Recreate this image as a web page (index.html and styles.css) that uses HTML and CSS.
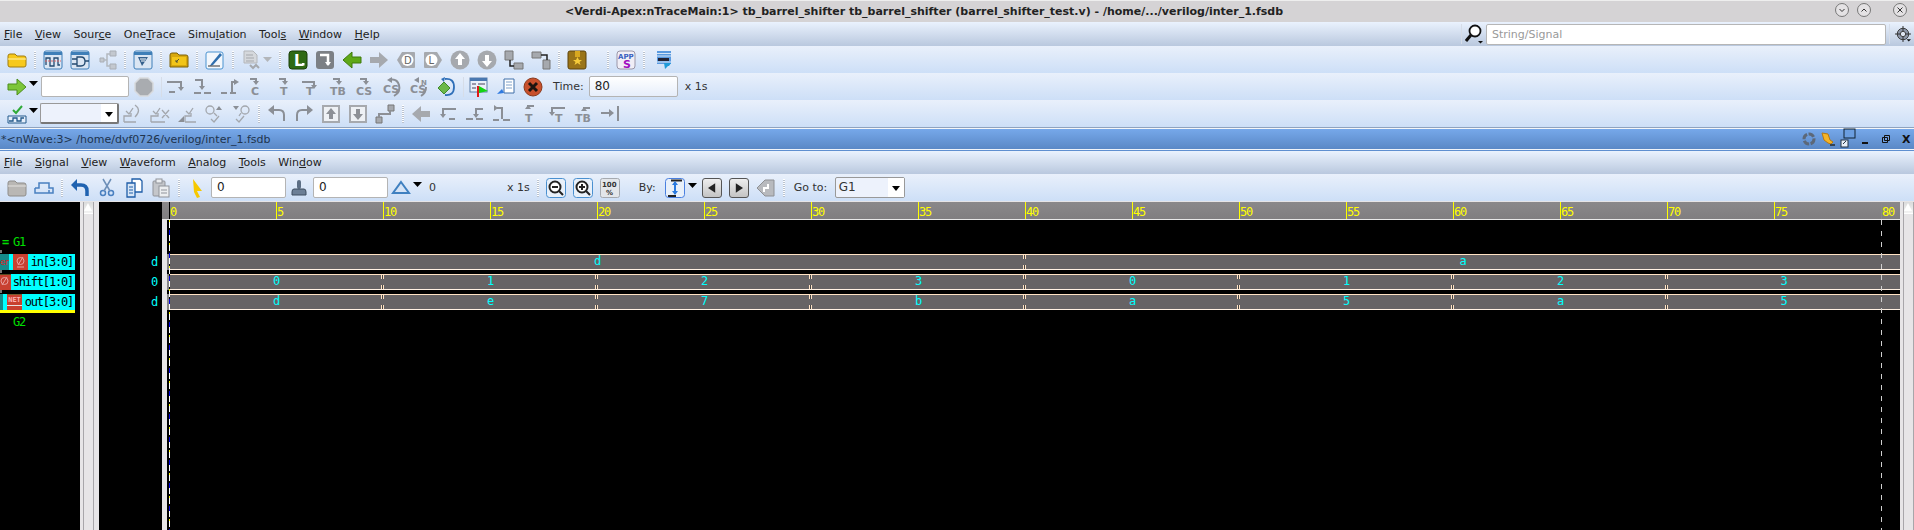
FILE: index.html
```html
<!DOCTYPE html>
<html lang="en">

<head>
  <meta charset="UTF-8">
  <title>Verdi</title>
  <link rel="stylesheet" href="styles.css">
</head>

<body>
  <div class="title">
    <span>&lt;Verdi-Apex:nTraceMain:1&gt; tb_barrel_shifter tb_barrel_shifter (barrel_shifter_test.v) - /home/.../verilog/inter_1.fsdb</span>
    <div class="wm">
      <svg class="wb" viewBox="0 0 14 14"><circle cx="7" cy="7" r="6.5"/><path d="M4.5 6l2.5 2.5L9.500 6"/></svg>
      <svg class="wb" viewBox="0 0 14 14"><circle cx="7" cy="7" r="6.5"/><path d="M4.5 8.500L7 6l2.500 2.500"/></svg>
      <svg class="wb wb-x" viewBox="0 0 14 14"><circle cx="7" cy="7" r="6.5"/><path d="M4.500 4.500l5 5M9.500 4.500l-5 5"/></svg>
    </div>
  </div>

  <div class="menu">
    <span><u>F</u>ile</span><span><u>V</u>iew</span><span>Sour<u>c</u>e</span><span>One<u>T</u>race</span><span>Simu<u>l</u>ation</span><span>Tool<u>s</u></span><span><u>W</u>indow</span><span><u>H</u>elp</span>
    <div class="search">
      <i class="vline"></i>
      <svg class="mag" viewBox="0 0 18 20"><circle cx="10" cy="7" r="5.500" fill="#fff" stroke="#111" stroke-width="1.800"/><path d="M6 11l-5 6" stroke="#111" stroke-width="3" fill="none"/><path d="M13 17h5l-2.500 2.500z" fill="#111"/></svg>
      <div class="searchbox">String/Signal</div>
      <i class="vline"></i>
      <svg class="target" viewBox="0 0 18 18"><circle cx="9" cy="9" r="6.500" fill="#8d96a8" stroke="#333"/><path d="M9 0v18M0 9h18" stroke="#222" fill="none"/><circle cx="9" cy="9" r="3" fill="#dfe6f2" stroke="#333"/><path d="M13 15h5l-2.500 2.500z" fill="#111"/></svg>
    </div>
  </div>

  <!-- main toolbar 1 -->
  <div class="tb">
    <svg class="ic" viewBox="0 0 20 20"><path d="M1 6q0-2 2-2h5l2 2h7q2 0 2 2v7q0 2-2 2H3q-2 0-2-2z" fill="#f7c91c" stroke="#a07c10"/><path d="M1 9h18" stroke="#fff3b0"/></svg>
    <i class="sep"></i>
    <svg class="ic" viewBox="0 0 20 20"><rect x="1" y="1" width="18" height="18" rx="2" fill="#dbe6f3" stroke="#3f7fb8"/><path d="M1 2h18v3H1z" fill="#3f7fb8"/><path d="M3 15V8h4v8h4V8h4v7h2" fill="none" stroke="#234a70" stroke-width="1.300"/><path d="M2 11h16" stroke="#d66" stroke-dasharray="2 1"/></svg>
    <svg class="ic" viewBox="0 0 20 20"><rect x="1" y="1" width="18" height="18" rx="2" fill="#dbe6f3" stroke="#3f7fb8"/><path d="M1 2h18v3H1z" fill="#3f7fb8"/><path d="M7 7h4q4 0 4 4.500T11 16H7zM2 9h5M2 14h5M15 11h4" fill="none" stroke="#234a70" stroke-width="1.300"/></svg>
    <svg class="ic" viewBox="0 0 20 20"><path d="M3 8h4v4H3zM13 1h6v5h-6zM13 14h6v5h-6z" fill="#c3c8cf" stroke="#a9aeb5"/><path d="M7 10h3V4h3M10 10v6h3" fill="none" stroke="#b3b8bf" stroke-width="1.500"/></svg>
    <i class="sep"></i>
    <svg class="ic" viewBox="0 0 20 20"><rect x="1" y="1" width="18" height="18" rx="2" fill="#dbe6f3" stroke="#3f7fb8"/><path d="M1 2h18v3H1z" fill="#3f7fb8"/><path d="M5 7h10L9 16z" fill="#35608c"/><path d="M7 9h6M8 11h4" stroke="#fff"/></svg>
    <i class="sep"></i>
    <svg class="ic" viewBox="0 0 20 20"><path d="M1 5q0-2 2-2h5l2 2h7q2 0 2 2v10H1z" fill="#d8a80c" stroke="#7d6008"/><path d="M3 7h14v8H3z" fill="#f2c518"/><path d="M7 12l3-3M7 10v2h2" stroke="#553" fill="none"/></svg>
    <i class="sep"></i>
    <svg class="ic" viewBox="0 0 20 20"><rect x="1" y="2" width="17" height="17" rx="2" fill="#f3f7fc" stroke="#4b93d0"/><path d="M6 14L15 3l2 2-9 10-3 1z" fill="#2f6fae"/><path d="M3 16h12" stroke="#333"/></svg>
    <i class="sep"></i>
    <svg class="ic" viewBox="0 0 20 20"><path d="M3 1h9l4 4v8H3z" fill="#d5d8dc" stroke="#b3b6ba"/><path d="M5 5h7M5 8h8M5 11h8" stroke="#a5a8ad"/><path d="M9 15l3 3 3-3 3 3" stroke="#a5a8ad" stroke-width="2" fill="none"/></svg>
    <svg class="dd dd-off" viewBox="0 0 9 5"><path d="M0 0h9L4.500 5z"/></svg>
    <i class="sep"></i>
    <svg class="ic" viewBox="0 0 20 20"><rect x="1" y="1" width="18" height="18" rx="3" fill="#2f6a14" stroke="#1a3f08"/><text x="6" y="16" class="lb" fill="#fff">L</text><rect x="14" y="13" width="2.500" height="2.500" fill="#fff"/></svg>
    <svg class="ic" viewBox="0 0 20 20"><rect x="1" y="1" width="18" height="18" rx="3" fill="#7c8085"/><path d="M5 5h8v10" fill="none" stroke="#fff" stroke-width="2.500"/><path d="M10 12l3 4 3-4z" fill="#fff"/></svg>
    <svg class="ic" viewBox="0 0 20 20"><path d="M1 10l9-8v5h9v6h-9v5z" fill="#5fa818" stroke="#3f7a0c"/></svg>
    <svg class="ic" viewBox="0 0 20 20"><path d="M19 10l-9-8v5H1v6h9v5z" fill="#a6a9ae"/></svg>
    <svg class="ic" viewBox="0 0 20 20"><path d="M1 10l5-8h12q1 0 1 1v14q0 1-1 1H6z" fill="#a6a9ae"/><circle cx="11.500" cy="10" r="6" fill="#fff"/><text x="8" y="14" class="ms">D</text></svg>
    <svg class="ic" viewBox="0 0 20 20"><path d="M19 10l-5-8H2q-1 0-1 1v14q0 1 1 1h12z" fill="#a6a9ae"/><circle cx="8.500" cy="10" r="6" fill="#fff"/><text x="5.500" y="14" class="ms">L</text></svg>
    <svg class="ic" viewBox="0 0 20 20"><circle cx="10" cy="10" r="9.500" fill="#a6a9ae"/><path d="M10 3l5 6h-3v6H8V9H5z" fill="#fff"/></svg>
    <svg class="ic" viewBox="0 0 20 20"><circle cx="10" cy="10" r="9.500" fill="#a6a9ae"/><path d="M10 17l5-6h-3V5H8v6H5z" fill="#fff"/></svg>
    <svg class="ic" viewBox="0 0 20 20"><path d="M1 1h8v9H1zM10 13h9v6h-9z" fill="#a6a9ae" stroke="#777"/><path d="M6 10v6h4" fill="none" stroke="#222" stroke-width="1.500"/></svg>
    <svg class="ic" viewBox="0 0 20 20"><path d="M1 2h9v6H1zM12 10h7v9h-7z" fill="#a6a9ae" stroke="#777"/><path d="M10 5h6v5" fill="none" stroke="#222" stroke-width="1.500"/></svg>
    <i class="sep"></i>
    <svg class="ic" viewBox="0 0 20 20"><rect x="1" y="1" width="18" height="18" rx="2" fill="#9a7418" stroke="#5c430c"/><path d="M8 1h5v6H8z" fill="#d9a81f"/><path d="M10.500 7l1.500 3h3l-2.500 2 1 3-3-2-3 2 1-3-2.500-2h3z" fill="#f6cc3a"/></svg>
    <i class="sep sep-far"></i>
    <svg class="ic" viewBox="0 0 20 20"><rect x="1" y="1" width="18" height="18" rx="3" fill="#f0eef6" stroke="#9a96a8"/><text x="2" y="9" class="ap">APP</text><text x="7" y="18" class="as">S</text></svg>
    <i class="sep"></i>
    <svg class="ic ic-push" viewBox="0 0 20 20"><path d="M3 1h14v13H3z" fill="#5a9ae0"/><path d="M3 3.500h14M3 6h14M3 12h14" stroke="#d5e6f8"/><path d="M4 8h11v3H4z" fill="#223"/><path d="M10 13h7l-2 3h-1l-3 3z" fill="#1f9ad8"/></svg>
  </div>

  <!-- main toolbar 2 -->
  <div class="tb">
    <svg class="ic" viewBox="0 0 20 20"><path d="M1 7h9V2l9 8-9 8v-5H1z" fill="#7cc63a" stroke="#4c8e1a"/></svg>
    <svg class="dd dd-l" viewBox="0 0 9 5"><path d="M0 0h9L4.500 5z"/></svg>
    <div class="inp inp-sig"></div>
    <svg class="ic ic-m2" viewBox="0 0 20 20"><path d="M6 1h8l5 5v8l-5 5H6l-5-5V6z" fill="#a9acb0" stroke="#d8dadd" stroke-width="1.500"/></svg>
    <i class="vline"></i>
    <svg class="ic g ic-m3" viewBox="0 0 20 20"><path d="M1 5h14v6M3 15h6"/><path d="M12 10h6l-3 4z" class="gf"/></svg>
    <svg class="ic g" viewBox="0 0 20 20"><path d="M2 3h7v7M1 16h7M11 16h7"/><path d="M6 9h6l-3 4z" class="gf"/></svg>
    <svg class="ic g" viewBox="0 0 20 20"><path d="M1 16h6M10 16h6M12 16V5h3"/><path d="M14 2l5 3-5 3z" class="gf"/></svg>
    <svg class="ic g" viewBox="0 0 20 20"><path d="M3 2h6v3"/><path d="M6 4h6l-3 4z" class="gf"/><text x="4" y="18" class="gt">C</text></svg>
    <svg class="ic g" viewBox="0 0 20 20"><path d="M5 2h6v3"/><path d="M8 4h6l-3 4z" class="gf"/><text x="6" y="18" class="gt">T</text></svg>
    <svg class="ic g" viewBox="0 0 20 20"><path d="M1 5h12v5"/><path d="M10 8h6l-3 4z" class="gf"/><text x="5" y="18" class="gt">T</text></svg>
    <svg class="ic g" viewBox="0 0 20 20"><path d="M5 2h6v3"/><path d="M8 4h6l-3 4z" class="gf"/><text x="2" y="18" class="gt">TB</text></svg>
    <svg class="ic g" viewBox="0 0 20 20"><path d="M5 2h6v3"/><path d="M8 4h6l-3 4z" class="gf"/><text x="1" y="18" class="gt">CS</text></svg>
    <svg class="ic g" viewBox="0 0 20 20"><path d="M7 3q8-2 10 5t-5 11" stroke-width="1.500"/><path d="M5 3l5-3v6z" class="gf"/><text x="1" y="16" class="gt">CS</text></svg>
    <svg class="ic g" viewBox="0 0 20 20"><path d="M7 3h3M17 10q0 6-5 9" stroke-width="1.500"/><path d="M5 3l5-3v6z" class="gf"/><text x="1" y="16" class="gt">CS</text><text x="12" y="8" class="gn">N</text></svg>
    <svg class="ic" viewBox="0 0 20 20"><path d="M9 2q9-1 9 8t-9 8" fill="none" stroke="#2f6fb8" stroke-width="1.800"/><path d="M8 5l-3-3 4-2z" fill="#2f6fb8"/><path d="M8 5l6 6-6 6-6-6z" fill="#6cb84a" stroke="#3f8a2a"/></svg>
    <i class="vline"></i>
    <svg class="ic ic-m2" viewBox="0 0 20 20"><rect x="1" y="1" width="17" height="14" fill="#eaf0f8" stroke="#5c7fa8"/><path d="M1 1h17v3H1z" fill="#4a78b0"/><path d="M3 6h4v2H3zM9 6h7v2H9zM3 10h4v2H3z" fill="#99a"/><path d="M9 9v11" stroke="#e01818" stroke-width="2"/><path d="M10 9l9 5-9 2z" fill="#14d414"/></svg>
    <svg class="ic" viewBox="0 0 20 20"><path d="M8 2h10v14H8z" fill="#fff" stroke="#3f6fa8"/><path d="M10 5h6M10 8h6M10 11h6" stroke="#7fa0c8"/><path d="M1 17l5-5 2 4z" fill="#2f7ae0"/></svg>
    <svg class="ic" viewBox="0 0 20 20"><circle cx="10" cy="10" r="9" fill="#c8502c" stroke="#8a3a1c"/><path d="M6 6l8 8M14 6l-8 8" stroke="#1c1410" stroke-width="3"/></svg>
    <span class="lab lab-time">Time:</span>
    <div class="inp inp-time">80</div>
    <span class="lab">x 1s</span>
  </div>

  <!-- main toolbar 3 -->
  <div class="tb">
    <svg class="ic" viewBox="0 0 20 20"><path d="M6 6l3 3 6-7" fill="none" stroke="#2faa38" stroke-width="2"/><path d="M1 12h18v7H1z" fill="#e6eefa" stroke="#235a8c"/><path d="M2 17h4v-3h4v3h4v-3h3" fill="none" stroke="#235a8c" stroke-width="1.300"/></svg>
    <svg class="dd dd-l" viewBox="0 0 9 5"><path d="M0 0h9L4.500 5z"/></svg>
    <div class="combo combo-a"><b></b></div>
    <svg class="ic g2 ic-m3" viewBox="0 0 20 20"><path d="M1 18v-6h7v-3M1 18h12M3 7l3 3 4-6"/><path d="M12 1q7 5 0 12" stroke-width="2"/></svg>
    <svg class="ic g2" viewBox="0 0 20 20"><path d="M1 18v-6h7v-3M1 18h14M3 7l3 3 4-6M12 6l7 8M19 6l-7 8"/></svg>
    <svg class="ic g2" viewBox="0 0 20 20"><path d="M8 18v-6h6v-3M8 18h11M9 7l3 3 4-6"/><path d="M1 18l6-6v6z" class="gf"/></svg>
    <svg class="ic g2" viewBox="0 0 20 20"><circle cx="6" cy="6" r="4"/><path d="M10 9l3 3M7 15l3 3 5-6"/><path d="M12 6l3-4 3 4z" class="gf"/></svg>
    <svg class="ic g2" viewBox="0 0 20 20"><circle cx="14" cy="6" r="4"/><path d="M10 9l-2 3M5 15l3 3 5-6"/><path d="M2 2h6l-3 4z" class="gf"/></svg>
    <i class="sep"></i>
    <svg class="ic g" viewBox="0 0 20 20"><path d="M5 6h7q5 0 5 5v6" stroke-width="3"/><path d="M7 1v10L1 6z" class="gf"/></svg>
    <svg class="ic g" viewBox="0 0 20 20"><path d="M15 6H8q-5 0-5 5v6" stroke-width="3"/><path d="M13 1v10l6-5z" class="gf"/></svg>
    <svg class="ic" viewBox="0 0 20 20"><rect x="1" y="1" width="18" height="18" fill="#a6a9ae"/><rect x="3" y="3" width="14" height="14" fill="#eef1f5"/><path d="M10 4l5 6h-3v5H8v-5H5z" fill="#8d9096"/></svg>
    <svg class="ic" viewBox="0 0 20 20"><rect x="1" y="1" width="18" height="18" fill="#a6a9ae"/><rect x="3" y="3" width="14" height="14" fill="#eef1f5"/><path d="M10 16l5-6h-3V5H8v5H5z" fill="#8d9096"/></svg>
    <svg class="ic" viewBox="0 0 20 20"><path d="M13 1h6v6h-6zM1 13h6v6H1z" fill="#a6a9ae" stroke="#777"/><path d="M15 7v3H4v3" fill="none" stroke="#8d9096" stroke-width="2"/></svg>
    <i class="sep"></i>
    <svg class="ic" viewBox="0 0 20 20"><path d="M1 10l9-8v5h9v6h-9v5z" fill="#a6a9ae"/></svg>
    <svg class="ic g" viewBox="0 0 20 20"><path d="M18 5H5v6M11 15h6"/><path d="M2 10h6l-3 4z" class="gf"/></svg>
    <svg class="ic g" viewBox="0 0 20 20"><path d="M18 5h-7v6M1 15h7M11 15h7"/><path d="M8 10h6l-3 4z" class="gf"/></svg>
    <svg class="ic g" viewBox="0 0 20 20"><path d="M5 4h5v11M11 16h7M1 16h6"/><path d="M2 1l4 3-4 3z" class="gf"/></svg>
    <svg class="ic g" viewBox="0 0 20 20"><path d="M15 2H9v3"/><path d="M6 5h6l-3-4z" class="gf"/><text x="6" y="18" class="gt">T</text></svg>
    <svg class="ic g" viewBox="0 0 20 20"><path d="M19 4H6v5"/><path d="M3 8h6l-3 4z" class="gf"/><text x="9" y="18" class="gt">T</text></svg>
    <svg class="ic g" viewBox="0 0 20 20"><path d="M17 4h-6v3"/><path d="M8 7h6l-3-4z" class="gf"/><text x="2" y="18" class="gt">TB</text></svg>
    <svg class="ic g" viewBox="0 0 20 20"><path d="M1 9h10"/><path d="M9 5l5 4-5 4z" class="gf"/><path d="M18 2v15" stroke-width="2.500"/></svg>
  </div>

  <i class="rule"></i>

  <div class="subtitle">
    <span>*&lt;nWave:3&gt; /home/dvf0726/verilog/inter_1.fsdb</span>
    <div class="subwm">
      <svg class="sb" viewBox="0 0 14 14"><circle cx="7" cy="7" r="5" fill="none" stroke="#5c6878" stroke-width="3" stroke-dasharray="6 1.500"/></svg>
      <svg class="sb sb-pin" viewBox="0 0 16 16"><path d="M2 2l6 1 2 6 3 2-2 2-3-1-4-3z" fill="#f5b428" stroke="#b87a10"/><path d="M10 14h5" stroke="#345" stroke-width="2"/></svg>
      <svg class="sb sb-win" viewBox="0 0 16 20"><rect x="4" y="1" width="11" height="9" fill="#6b9ee0" stroke="#123"/><rect x="1" y="12" width="7" height="7" fill="#e8eef6" stroke="#234"/><path d="M3 16l3-3" stroke="#234"/></svg>
      <i class="minb"></i>
      <svg class="sb sb-res" viewBox="0 0 8 8"><path d="M2.500.5h5v5h-5zM.5 2.500h5v5h-5z" fill="#6f9fe0" stroke="#111"/></svg>
      <span class="subx">X</span>
    </div>
  </div>

  <div class="menu menu-w">
    <span><u>F</u>ile</span><span><u>S</u>ignal</span><span><u>V</u>iew</span><span><u>W</u>aveform</span><span><u>A</u>nalog</span><span><u>T</u>ools</span><span>Win<u>d</u>ow</span>
  </div>

  <!-- nWave toolbar -->
  <div class="tb tb-w">
    <svg class="ic" viewBox="0 0 20 20"><path d="M1 5q0-2 2-2h5l2 2h7q2 0 2 2v9q0 2-2 2H3q-2 0-2-2z" fill="#b9b7b4" stroke="#8f8d8a"/><path d="M1 8h18" stroke="#e4e2df"/></svg>
    <svg class="ic" viewBox="0 0 20 20"><path d="M1 10h4V5h10v5h4v5h-4v-3M1 10v5h14v-2" fill="none" stroke="#4a80c0" stroke-width="1.500"/></svg>
    <i class="sep"></i>
    <svg class="ic" viewBox="0 0 20 20"><path d="M5 7h6q6 0 6 6v5" fill="none" stroke="#1f62b0" stroke-width="3.500"/><path d="M7 1v12L1 7z" fill="#1f62b0"/></svg>
    <svg class="ic" viewBox="0 0 20 20"><circle cx="6" cy="15" r="2.500" fill="none" stroke="#4a80c0" stroke-width="1.500"/><circle cx="14" cy="15" r="2.500" fill="none" stroke="#4a80c0" stroke-width="1.500"/><path d="M7 13L14 1M13 13L6 1" stroke="#6d8fb8" stroke-width="1.500"/></svg>
    <svg class="ic" viewBox="0 0 20 20"><path d="M8 1h8l2 2v11H8z" fill="#fff" stroke="#1f5ea8" stroke-width="1.300"/><path d="M3 5h8v14H3z" fill="#d8e6f6" stroke="#1f5ea8" stroke-width="1.300"/><path d="M5 9h4M5 12h4M5 15h4" stroke="#1f5ea8"/></svg>
    <svg class="ic" viewBox="0 0 20 20"><rect x="2" y="3" width="12" height="15" rx="1" fill="#c4c6ca" stroke="#90939a"/><rect x="5" y="1" width="6" height="4" fill="#eceef0" stroke="#90939a"/><rect x="8" y="8" width="10" height="11" fill="#eceef0" stroke="#90939a"/><path d="M10 12h6M10 15h6" stroke="#90939a"/></svg>
    <i class="sep"></i>
    <svg class="ic" viewBox="0 0 20 20"><path d="M6 1l9 12H10l3 6-3 1-3-6z" fill="#f6c800"/></svg>
    <div class="inp inp-w inp-first">0</div>
    <svg class="ic ic-m4" viewBox="0 0 20 20"><rect x="8" y="2" width="4" height="9" rx="2" fill="#5d6f85"/><path d="M5 11h10q2 0 2 3v3H3v-3q0-3 2-3z" fill="#6c7f96" stroke="#3e4e60"/></svg>
    <div class="inp inp-w inp-second">0</div>
    <svg class="ic ic-m4" viewBox="0 0 20 20"><path d="M10 4l8 11H2z" fill="#d6e4f6" stroke="#3f80c0" stroke-width="2"/></svg>
    <svg class="dd dd-l" viewBox="0 0 9 5"><path d="M0 0h9L4.500 5z"/></svg>
    <span class="lab lab-z">0</span>
    <span class="lab lab-x">x 1s</span>
    <i class="sep"></i>
    <svg class="ic" viewBox="0 0 20 20"><rect x=".5" y=".5" width="19" height="19" rx="3" fill="#e8f0fa" stroke="#4a90d0"/><circle cx="9" cy="9" r="5.500" fill="#fff" stroke="#222" stroke-width="2"/><path d="M6 9h6M13 13l4 4" stroke="#222" stroke-width="2"/></svg>
    <svg class="ic" viewBox="0 0 20 20"><rect x=".5" y=".5" width="19" height="19" rx="3" fill="#e8f0fa" stroke="#4a90d0"/><circle cx="9" cy="9" r="5.500" fill="#fff" stroke="#222" stroke-width="2"/><path d="M6 9h6M9 6v6M13 13l4 4" stroke="#222" stroke-width="2"/></svg>
    <svg class="ic" viewBox="0 0 20 20"><rect x=".5" y=".5" width="19" height="19" rx="2" fill="#e3e6ea" stroke="#a6aab0"/><text x="2" y="9" class="pc">100</text><text x="6" y="17" class="pc">%</text></svg>
    <span class="lab lab-by">By:</span>
    <svg class="ic ic-p2" viewBox="0 0 20 20"><rect x=".5" y=".5" width="19" height="19" rx="3" fill="#e8f0fa" stroke="#4a80e0"/><path d="M6 2.500h11M3 18h8" stroke="#222" stroke-width="2"/><path d="M10 4v12" stroke="#2a7ae0" stroke-width="2"/><path d="M7 7l3-4 3 4zM7 13l3 4 3-4z" fill="#2a7ae0"/></svg>
    <svg class="dd dd-t" viewBox="0 0 9 5"><path d="M0 0h9L4.500 5z"/></svg>
    <div class="navb nav-prev"><svg viewBox="0 0 10 12"><path d="M9 0v12L0 6z"/></svg></div>
    <div class="navb"><svg viewBox="0 0 10 12"><path d="M1 0v12l9-6z"/></svg></div>
    <svg class="ic" viewBox="0 0 20 20"><path d="M1 10l8-8h9v16H9z" fill="#b8babe" stroke="#8e9094"/><path d="M8 14v-4h4V6" fill="none" stroke="#fff" stroke-width="2"/></svg>
    <i class="sep"></i>
    <span class="lab lab-go">Go to:</span>
    <div class="combo combo-g"><span>G1</span><b></b></div>
  </div>

  <div class="panes">
    <div class="names">
      <div class="nrow grp"><em>=</em>G1</div>
      <div class="nrow sigrow">
        <span class="teal teal-a">er</span>
        <svg class="redic" viewBox="0 0 15 16"><rect width="15" height="16" fill="#c84030"/><circle cx="7.500" cy="7" r="3.500" fill="none" stroke="#e8a0a0"/><path d="M5 11l5-8M4 13h7" stroke="#e8a0a0"/></svg>
        <span class="nm">in[3:0]</span>
      </div>
      <div class="nrow sigrow">
        <svg class="redic redic-a" viewBox="0 0 11 16"><rect width="11" height="16" fill="#c84030"/><path d="M0 0h11" stroke="#5a4a20" stroke-width="2"/><circle cx="4.500" cy="7" r="3.500" fill="none" stroke="#e8a0a0"/><path d="M2 11l5-8" stroke="#e8a0a0"/></svg>
        <span class="nm">shift[1:0]</span>
      </div>
      <div class="nrow sigrow sel">
        <span class="teal teal-b"></span><span class="netic">NET</span><span class="nm">out[3:0]</span>
      </div>
      <div class="nrow grp grp-2">G2</div>
    </div>
    <div class="vscroll"><div class="up"></div></div>
    <div class="vals">
      <div>d</div>
      <div>0</div>
      <div>d</div>
    </div>
    <div class="wavecol">
      <div class="ruler">
        <span class="t0">0</span><span>5</span><span>10</span><span>15</span><span>20</span><span>25</span><span>30</span><span>35</span><span>40</span><span>45</span><span>50</span><span>55</span><span>60</span><span>65</span><span>70</span><span>75</span><span class="t80">80</span>
      </div>
      <div class="wavebody">
        <div class="gutter"></div>
        <div class="canvas">
          <div class="sig"><b class="stub"></b><span class="seg w40">d</span><span class="seg last">a</span></div>
          <div class="sig"><b class="stub"></b><span class="seg w10">0</span><span class="seg w10">1</span><span class="seg w10">2</span><span class="seg w10">3</span><span class="seg w10">0</span><span class="seg w10">1</span><span class="seg w10">2</span><span class="seg last">3</span></div>
          <div class="sig"><b class="stub"></b><span class="seg w10">d</span><span class="seg w10">e</span><span class="seg w10">7</span><span class="seg w10">b</span><span class="seg w10">a</span><span class="seg w10">5</span><span class="seg w10">a</span><span class="seg last">5</span></div>
          <i class="cursor-a"></i>
          <i class="cursor-b"></i>
        </div>
      </div>
    </div>
    <div class="vscroll vscroll-r"><div class="up"></div></div>
  </div>
</body>

</html>
```

FILE: styles.css
```css
* {
  margin: 0;
  padding: 0;
  box-sizing: border-box;
}

html,
body {
  height: 530px;
  overflow: hidden;
}

body {
  background: #000;
  font-family: "DejaVu Sans", sans-serif;
  font-size: 11px;
  color: #222;
}

i,
em {
  font-style: normal;
}

/* window title */
.title {
  height: 22px;
  background: #d5d3d5;
  border-top: 1px solid #eee;
  display: flex;
  align-items: center;
  justify-content: center;
  position: relative;
  padding-right: 66px;
  font-weight: bold;
  font-size: 11px;
  color: #222;
}

.wm {
  position: absolute;
  top: 2px;
  left: 1835px;
  display: flex;
}

.wb {
  width: 14px;
  height: 14px;
  margin-right: 8px;
  fill: #e4e2e4;
  stroke: #777;
}

.wb-x {
  margin-left: 14px;
  margin-right: 0;
}

.wb path {
  fill: none;
  stroke: #333;
}

/* menus */
.menu {
  height: 24px;
  background: linear-gradient(#eaf2fe, #b9c8de);
  display: flex;
  align-items: center;
  gap: 12.500px;
  padding-left: 4px;
  color: #222;
  position: relative;
}

.menu u {
  text-decoration-thickness: 1px;
}

.menu-w {
  height: 24px;
  border-top: 1px solid #5f8fd0;
}

.search {
  margin-left: auto;
  display: flex;
  align-items: center;
  gap: 3px;
  padding-right: 3px;
}

.vline {
  display: block;
  width: 1px;
  height: 20px;
  background: #d6dde8;
}

.mag {
  width: 18px;
  height: 20px;
}

.target {
  width: 16px;
  height: 16px;
  margin-left: 2px;
}

.searchbox {
  width: 400px;
  height: 21px;
  background: #fff;
  border: 1px solid #b6b6b6;
  border-radius: 2px;
  padding-left: 5px;
  line-height: 19px;
  color: #999;
}

/* toolbars */
.tb {
  height: 27px;
  background: linear-gradient(#e9f0fb, #cddff7);
  display: flex;
  align-items: center;
  gap: 7px;
  padding-left: 7px;
  color: #333;
}

.ic {
  width: 20px;
  height: 20px;
  flex: none;
  overflow: visible;
}

.ic-m2 {
  margin-left: -2px;
}

.ic-m3 {
  margin-left: -3px;
}

.ic-m4 {
  margin-left: -4px;
}

.ic-p2 {
  margin-left: 2px;
}

.ic-push {
  margin-left: 2px;
}

.g path,
.g2 path,
.g2 circle {
  fill: none;
  stroke: #8b8f96;
  stroke-width: 2;
}

.g2 path,
.g2 circle {
  stroke: #a3a7ad;
  stroke-width: 1.300;
}

.g .gf,
.g2 .gf {
  fill: #8b8f96;
  stroke: none;
}

.gt {
  font-size: 11px;
  font-weight: bold;
  fill: #8b8f96;
}

.gn {
  font-size: 7px;
  font-weight: bold;
  fill: #8b8f96;
}

.lb {
  font-size: 15px;
  font-weight: bold;
}

.ms {
  font-size: 10px;
  fill: #666;
}

.ap {
  font-size: 7px;
  font-weight: bold;
  fill: #3a5fc0;
}

.as {
  font-size: 11px;
  font-weight: bold;
  fill: #a010c0;
}

.pc {
  font-size: 7px;
  font-weight: bold;
  fill: #333;
}

.sep {
  display: block;
  width: 2px;
  height: 18px;
  flex: none;
  background: repeating-linear-gradient(#fff 0 1px, #b9c2cf 1px 2px);
}

.sep-far {
  margin-left: 13px;
}

.dd {
  width: 9px;
  height: 5px;
  flex: none;
  fill: #000;
  margin-bottom: 6px;
}

.dd-l {
  margin-left: -5px;
}

.dd-off {
  fill: #b3b6ba;
  margin-left: -5px;
  margin-bottom: 0;
}

.dd-t {
  margin-left: -4px;
  margin-bottom: 4px;
}

.inp {
  height: 21px;
  flex: none;
  background: #fff;
  border: 1px solid #b4b4b4;
  border-radius: 2px;
  padding-left: 5px;
  line-height: 19px;
  font-size: 12px;
  color: #222;
}

.inp-sig {
  width: 88px;
  margin-left: -4px;
}

.inp-time {
  width: 89px;
  margin-left: -2px;
  background: linear-gradient(#fff, #e6eefb);
}

.inp-w {
  width: 75px;
}

.inp-first,
.inp-second {
  margin-left: -3px;
}

.lab {
  flex: none;
  color: #333;
}

.lab-time {
  margin-left: 3px;
}

.lab-z {
  width: 7px;
}

.lab-x {
  margin-left: 64px;
}

.lab-by {
  margin-left: 12px;
  width: 17px;
}

.lab-go {
  margin-left: 2px;
  width: 36px;
}

.combo {
  height: 21px;
  flex: none;
  background: #edf2fc;
  border: 1px solid #999;
  border-radius: 2px;
  display: flex;
  justify-content: space-between;
}

.combo span {
  padding-left: 3px;
  line-height: 19px;
  font-size: 12px;
}

.combo b {
  display: block;
  width: 16px;
  margin-left: auto;
  background: #fff;
  position: relative;
}

.combo b::after {
  content: "";
  position: absolute;
  left: 4px;
  top: 8px;
  border: 4px solid transparent;
  border-top: 5px solid #000;
}

.combo-a {
  width: 79px;
  margin-left: -5px;
  border-right: 2px solid #777;
  border-bottom: 2px solid #777;
}

.combo-g {
  width: 70px;
  margin-left: -2px;
}

.navb {
  width: 20px;
  height: 20px;
  flex: none;
  border: 1px solid #555;
  border-radius: 3px;
  background: linear-gradient(#eee, #c4c4c4);
  display: flex;
  align-items: center;
  justify-content: center;
}

.navb svg {
  width: 8px;
  height: 10px;
  fill: #222;
}

.nav-prev {
  margin-left: -2px;
}

.rule {
  display: block;
  height: 2px;
  background: linear-gradient(#8fa3bf 50%, #f4f6f9 50%);
}

/* inner window bar */
.subtitle {
  height: 21px;
  background: linear-gradient(#76a8ea, #5a88c6);
  border-bottom: 1px solid #f0f4fa;
  display: flex;
  align-items: center;
  padding-left: 1px;
  color: #20344e;
  position: relative;
}

.subwm {
  position: absolute;
  left: 1802px;
  top: 0;
  height: 20px;
  display: flex;
  align-items: center;
}

.sb {
  width: 14px;
  height: 14px;
  flex: none;
}

.sb-pin {
  width: 16px;
  height: 16px;
  margin-left: 4px;
}

.sb-win {
  width: 16px;
  height: 20px;
  margin-left: 4px;
  margin-top: -2px;
}

.minb {
  display: block;
  width: 6px;
  height: 2px;
  background: #111;
  margin: 8px 0 0 6px;
}

.sb-res {
  width: 8px;
  height: 8px;
  margin-left: 14px;
}

.subx {
  margin-left: 12px;
  font-weight: bold;
  font-size: 11px;
  color: #111;
}

/* panes */
.panes {
  height: 329px;
  display: flex;
  border-top: 1px solid #e6e4e6;
  font-family: "DejaVu Sans Mono", monospace;
  font-size: 12px;
  letter-spacing: -1.200px;
}

.names {
  width: 80px;
  flex: none;
  padding-top: 32px;
  display: flex;
  flex-direction: column;
  gap: 4px;
}

.nrow {
  height: 16px;
  display: flex;
  align-items: center;
  position: relative;
}

.grp {
  color: #00e000;
  padding-left: 13px;
}

.grp em {
  position: absolute;
  left: 2px;
  font-weight: bold;
}

.sigrow {
  width: 75px;
  background: #00ffff;
  color: #000;
}

.sigrow::after {
  content: "";
  position: absolute;
  left: 0;
  top: -4px;
  width: 2px;
  height: 3px;
  background: #777;
}

.sel {
  box-shadow: 0 3px 0 #ffff00;
}

.nm {
  margin-left: auto;
  padding-right: 2px;
}

.teal {
  height: 16px;
  background: #158a8a;
  color: #e01818;
  font-size: 9px;
  line-height: 16px;
  overflow: hidden;
}

.teal-a {
  width: 9px;
  margin-right: 4px;
}

.teal-b {
  width: 3px;
  margin-right: 4px;
}

.redic {
  display: block;
  width: 15px;
  height: 16px;
  flex: none;
}

.redic-a {
  width: 11px;
}

.netic {
  width: 15px;
  height: 16px;
  flex: none;
  background: #c84030;
  border-top: 1px solid #7a5a30;
  color: #ffb0b0;
  font-size: 7px;
  font-weight: bold;
  letter-spacing: 0;
  line-height: 10px;
  text-align: center;
  box-shadow: inset 0 -4px 0 #c84030, inset 0 -5px 0 #e8e0e0;
}

.vscroll {
  width: 19px;
  flex: none;
  background: #e7e5e7;
  padding-left: 3px;
}

.vscroll .up {
  width: 11px;
  height: 100%;
  border-left: 1px solid #a8a6aa;
  border-right: 1px solid #a8a6aa;
  background: linear-gradient(#dadada, #f4f4f4 11px, #fff 11px, #fff 12px, #e7e5e7 12px);
  position: relative;
}

.vscroll .up::before {
  content: "";
  position: absolute;
  left: 0;
  top: 1px;
  border: 4.500px solid transparent;
  border-bottom: 8px solid #fff;
  border-top: 0;
}

.vscroll-r {
  width: 14px;
}

.vals {
  width: 63px;
  flex: none;
  padding-top: 52px;
  padding-right: 5px;
  color: #00ffff;
  text-align: right;
}

.vals div {
  height: 20px;
  line-height: 16px;
}

.wavecol {
  flex: 1;
  display: flex;
  flex-direction: column;
  min-width: 0;
}

.ruler {
  height: 18px;
  flex: none;
  background: linear-gradient(#8a888a, #807e80);
  border-bottom: 1px solid #e8e8e8;
  display: flex;
  padding-left: 7px;
  color: #ffff00;
}

.ruler span {
  width: 107px;
  flex: none;
  border-left: 1px solid #ffff00;
  line-height: 20px;
}

.ruler .t0 {
  border-left-color: #000;
}

.ruler .t80 {
  width: 19px;
  border-left-color: #8a888a;
}

.wavebody {
  flex: 1;
  display: flex;
}

.gutter {
  width: 5px;
  background: #e7e5e7;
}

.canvas {
  flex: 1;
  position: relative;
  padding-top: 34px;
  display: flex;
  flex-direction: column;
  gap: 4px;
}

.sig {
  height: 16px;
  display: flex;
}

.stub {
  display: block;
  width: 2px;
  background: #888688;
}

.seg {
  height: 16px;
  background: #666365;
  border-top: 1px solid #ffe2c4;
  border-bottom: 1px solid #fff0e2;
  color: #00ffff;
  text-align: center;
  line-height: 13px;
  position: relative;
}

/* value change: two short strokes at top and bottom of the bus */
.seg + .seg::before {
  content: "";
  position: absolute;
  left: -2px;
  top: 0;
  width: 3px;
  height: 14px;
  background:
    linear-gradient(90deg, #ffe2c4 1px, #444 1px 2px, #ffe2c4 2px) top / 100% 4px no-repeat,
    linear-gradient(90deg, #ffe2c4 1px, #444 1px 2px, #ffe2c4 2px) bottom / 100% 4px no-repeat;
}

.w10 {
  width: 214px;
}

.w40 {
  width: 856px;
}

.last {
  flex: 1;
}

.cursor-a {
  position: absolute;
  left: 2px;
  top: 0;
  bottom: 0;
  width: 1px;
  background: repeating-linear-gradient(#ffff00 0 2px, #fff 2px 8px, #000 8px 10px, #0000e0 10px 15px, #fff 15px 21px, #000 21px 23px);
}

.cursor-b {
  position: absolute;
  left: 1714px;
  top: 0;
  bottom: 0;
  width: 1px;
  background: repeating-linear-gradient(#cfcfcf 0 5px, transparent 5px 11px);
}
```
